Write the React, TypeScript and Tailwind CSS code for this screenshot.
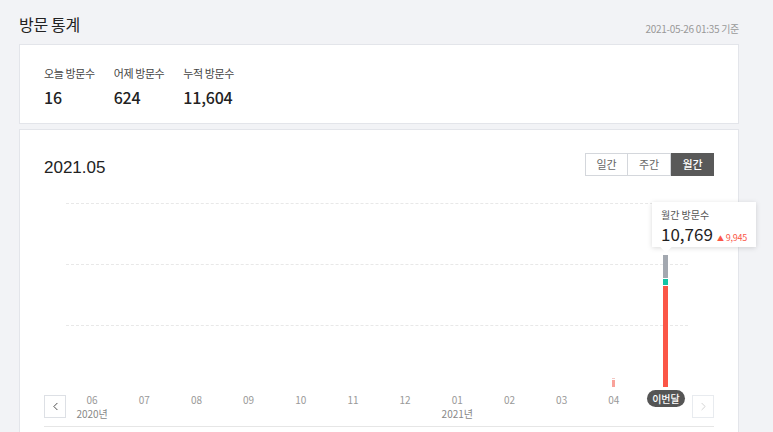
import { ChevronLeft, ChevronRight } from "lucide-react";

const months = ["06", "07", "08", "09", "10", "11", "12", "01", "02", "03", "04", "이번달"];

function Bar({ month }: { month: string }) {
    if (month === "04") {
        return (
            <div className="flex flex-col items-center gap-[1px]">
                <div className="w-[3px] h-[1px] bg-[#f3c6c2]" />
                <div className="w-[3px] h-[7px] bg-[#f9a29a]" />
            </div>
        );
    }
    if (month === "이번달") {
        return (
            <div className="flex flex-col items-center gap-[1px]">
                <div className="w-[5px] h-[23px] bg-[#a3a8b0]" />
                <div className="w-[5px] h-[6px] bg-[#12c3a5]" />
                <div className="w-[5px] h-[101px] bg-[#fb5647]" />
            </div>
        );
    }
    return null;
}

export default function App() {
    return (
        <div className="min-h-[432px] bg-[#f2f3f6] pl-[19px] pr-[34px] text-[#222] font-['Noto_Sans_CJK_KR','Noto_Sans',sans-serif] overflow-hidden">
            <div className="h-[44px] flex items-center justify-between pt-[4px]">
                <h1 className="text-[16px] text-[#222] tracking-[-0.3px]">방문 통계</h1>
                <span className="text-[10px] text-[#999] pt-[8px] tracking-[-0.3px]">2021-05-26 01:35 기준</span>
            </div>

            <div className="bg-white border border-[#e3e5ea] h-[80px] pl-[24px] pt-[20px] flex gap-[19px]">
                {[
                    ["오늘 방문수", "16"],
                    ["어제 방문수", "624"],
                    ["누적 방문수", "11,604"],
                ].map(([label, value]) => (
                    <div key={label} className="flex flex-col">
                        <span className="text-[11px] text-[#444] leading-[16px] tracking-[-0.4px]">{label}</span>
                        <span className="text-[16px] leading-[26px] mt-[3px] font-medium tracking-[-0.2px]">{value}</span>
                    </div>
                ))}
            </div>

            <div className="bg-white border border-[#e3e5ea] mt-[5px] h-[320px] px-[24px] pt-[23px]">
                <div className="flex items-center justify-between h-[23px]">
                    <span className="text-[17px] font-['Liberation_Sans',sans-serif] text-[#222] mt-[6px]">2021.05</span>
                    <div className="flex text-[11px]">
                        <button className="w-[43px] h-[23px] border border-[#d4d7dc] text-[#666]">일간</button>
                        <button className="w-[43px] h-[23px] border border-l-0 border-[#d4d7dc] text-[#666]">주간</button>
                        <button className="w-[43px] h-[23px] bg-[#595959] text-white font-medium">월간</button>
                    </div>
                </div>

                <div className="relative mt-[27px]">
                    <div className="absolute left-[22px] right-[26px] top-0 flex flex-col gap-[60px] pointer-events-none">
                        <div className="border-t border-dashed border-[#e8e8e8]" />
                        <div className="border-t border-dashed border-[#e8e8e8]" />
                        <div className="border-t border-dashed border-[#e8e8e8]" />
                    </div>

                    <div className="flex h-[184px] pl-[22px] pr-[22px]">
                        {months.map((m) => (
                            <div key={m} className="flex-1 flex items-end justify-center relative">
                                <Bar month={m} />
                                {m === "이번달" && (
                                    <div className="absolute left-[calc(50%-14px)] top-[-1px] w-[104px] h-[45px] bg-white shadow-[0_1px_5px_rgba(0,0,0,0.15)] pl-[9px] pt-[6px] z-10">
                                        <div className="text-[10px] text-[#555] leading-[14px] whitespace-nowrap">월간 방문수</div>
                                        <div className="flex items-baseline gap-[4px] whitespace-nowrap mt-[2px]">
                                            <span className="text-[17px] leading-[20px] text-[#222]">10,769</span>
                                            <span className="text-[9px] text-[#fb5647] tracking-[-0.2px]">
                                                <span className="text-[7px] mr-[2px]">▲</span>9,945
                                            </span>
                                        </div>
                                        <div className="absolute left-[10px] -bottom-[4px] w-[8px] h-[8px] bg-white rotate-45" />
                                    </div>
                                )}
                            </div>
                        ))}
                    </div>

                    <div className="flex h-[40px] border-b border-[#e6e6e6] pb-[9px]">
                        <button className="w-[22px] h-[23px] mt-[8px] border border-[#dde0e5] flex items-center justify-center text-[#333]">
                            <ChevronLeft size={13} strokeWidth={1.6} />
                        </button>
                        {months.map((m) => (
                            <div key={m} className="flex-1 flex flex-col items-center pt-[6px]">
                                {m === "이번달" ? (
                                    <span className="mt-[-3px] px-[5px] h-[17px] rounded-full bg-[#555] text-white text-[10px] leading-[17px] font-medium">{m}</span>
                                ) : (
                                    <span className="text-[10px] text-[#999] leading-[14px]">{m}</span>
                                )}
                                {m === "06" && <span className="text-[10px] text-[#888] leading-[14px]">2020년</span>}
                                {m === "01" && <span className="text-[10px] text-[#888] leading-[14px]">2021년</span>}
                            </div>
                        ))}
                        <button className="w-[22px] h-[23px] mt-[8px] border border-[#e8ebef] flex items-center justify-center text-[#ccc]">
                            <ChevronRight size={13} strokeWidth={1.6} />
                        </button>
                    </div>
                </div>
            </div>
        </div>
    );
}
